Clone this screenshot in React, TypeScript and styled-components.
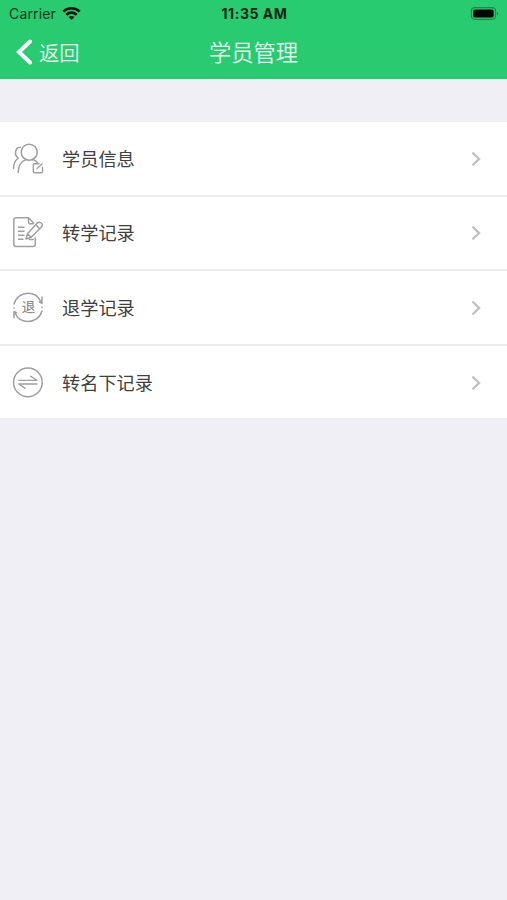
import React from "react";
import styled, { createGlobalStyle } from "styled-components";

const GlobalStyle = createGlobalStyle`
  * { box-sizing: border-box; }
  body {
    margin: 0;
    background: #f0eff5;
    font-family: "Inter", "Noto Sans CJK SC", sans-serif;
  }
`;

const Page = styled.div`
  min-height: 900px;
  background: #f0eff5;
`;

const Header = styled.header`
  height: 79px;
  background: #28cb70;
`;

const StatusBar = styled.div`
  display: grid;
  grid-template-columns: 1fr auto 1fr;
  align-items: center;
  height: 27px;
  padding: 0 7px 0 9px;
  color: #06351b;
`;

const Carrier = styled.div`
  display: flex;
  align-items: center;
  gap: 6px;
  font-size: 14px;
  line-height: 27px;
  letter-spacing: 0.15px;
`;

const Clock = styled.div`
  font-size: 14px;
  line-height: 27px;
  font-weight: 700;
  letter-spacing: 0.55px;
  color: #042512;
`;

const Battery = styled.div`
  display: flex;
  justify-content: flex-end;
`;

const NavBar = styled.nav`
  display: grid;
  grid-template-columns: 1fr auto 1fr;
  align-items: center;
  height: 50px;
  padding: 0 16px;
  color: #e6fbee;
`;

const BackButton = styled.button`
  display: flex;
  align-items: center;
  gap: 6px;
  padding: 0;
  border: 0;
  background: none;
  color: inherit;
  font: 350 20.3px/30px "Noto Sans CJK SC", sans-serif;
`;

const Title = styled.h1`
  margin: 0;
  padding-bottom: 2px;
  font: 350 22.3px/32px "Noto Sans CJK SC", sans-serif;
`;

const List = styled.ul`
  margin: 0;
  padding: 43px 0 0;
  list-style: none;
`;

const Row = styled.li`
  display: flex;
  align-items: center;
  height: 74.6px;
  padding: 1px 26px 0 12px;
  border-bottom: 2px solid #ebebed;
  background: #fff;
`;

const Label = styled.span`
  flex: 1;
  margin-left: 18px;
  padding-bottom: 2px;
  color: #404040;
  font: 400 18.2px/28px "Noto Sans CJK SC", sans-serif;
`;

const IconBox = styled.svg`
  width: 32px;
  height: 32px;
  fill: none;
  stroke: #a0a0a0;
  stroke-width: 1.5;
  stroke-linecap: round;
  stroke-linejoin: round;
`;

const IconText = styled.text`
  fill: #909090;
  stroke: none;
  font: 500 13.5px "Noto Sans CJK SC", sans-serif;
`;

const MembersIcon = () => (
  <IconBox viewBox="0 0 32 32">
    <circle cx="17.2" cy="9.2" r="8" />
    <path d="M6.2 29.500c.1-5.900 2.800-11 7.600-12.900M20.800 16.500c2.500.8 3.700 1.800 4.700 3.200M8.300 4.200C3 4.400 1.800 12 6.300 15 3.200 17.400 1.500 21.200 1.500 25.300" />
    <path strokeWidth="1.400" d="M27 20.700h-4.500a1.200 1.200 0 0 0-1.200 1.200v6.600a1.200 1.200 0 0 0 1.200 1.200h6.800a1.200 1.200 0 0 0 1.200-1.200v-4M25 25.500l5.200-4.700" />
  </IconBox>
);

const TransferIcon = () => (
  <IconBox viewBox="0 0 32 32">
    <path d="M23.300 21v6.300a2.200 2.200 0 0 1-2.200 2.200H4a2.200 2.200 0 0 1-2.200-2.200V3A2.200 2.200 0 0 1 4 .800h12.500l5 5.200M16.500 1v4.300a1.500 1.500 0 0 0 1.500 1.500h3.200" />
    <path d="M6.500 10.300h5.500M6.500 14.300h5.500M6.500 18.300h5.500M6.500 22.300h4.500M17.300 22.400h4" />
    <path d="m14 22 1.500-5.200 9.800-10.700c2.300-2.300 6.500.9 4.400 3.600L19.200 20.300 14 22ZM23.700 7.800l4.100 3.900M15.700 17l3.400 3.100" />
  </IconBox>
);

const WithdrawalIcon = () => (
  <IconBox viewBox="0 0 32 32">
    <path d="M2 12C4 5 10 1.200 16 1.200c5.300 0 10.300 3 12.600 8M30 5v6.200l-2.600-1.200M30 19c-2 7-8 10.500-14 10.500-5.300 0-10.300-2.700-12.600-7.700M2 25.700v-6.200l2.600 1.200M2 15.700v.2M30 15.200v.2" />
    <IconText x="9.700" y="20.300">退</IconText>
  </IconBox>
);

const SwapIcon = () => (
  <IconBox viewBox="0 0 32 32">
    <circle cx="15.900" cy="15.400" r="14.300" />
    <path strokeWidth="1.300" d="M6.700 13.300h18.200l-6.500-4.200M25 17H6.700l6.500 4.400" />
  </IconBox>
);

const BackIcon = styled.svg`
  width: 17px;
  height: 28px;
  fill: none;
  stroke: #fff;
  stroke-width: 4;
  stroke-linecap: round;
`;

const Chevron = styled.svg`
  width: 10px;
  height: 16px;
  fill: none;
  stroke: #c1c1c3;
  stroke-width: 2.4;
`;

const rows = [
  { label: "学员信息", Icon: MembersIcon },
  { label: "转学记录", Icon: TransferIcon },
  { label: "退学记录", Icon: WithdrawalIcon },
  { label: "转名下记录", Icon: SwapIcon },
];

export default function App() {
  return (
    <Page>
      <GlobalStyle />
      <Header>
        <StatusBar>
          <Carrier>
            Carrier
            <svg width="19" height="14" viewBox="0 0 19 14" fill="none" stroke="#03150a" strokeWidth="2.600">
              <path d="M1.300 4.600C6 .2 13 .2 17.700 4.600M4.300 7.700c3-2.800 7.400-2.800 10.400 0" />
              <path d="M6.600 10.100c1.700-1.500 4.100-1.500 5.800 0l-2.900 3Z" fill="#03150a" stroke="none" />
            </svg>
          </Carrier>
          <Clock>11:35 AM</Clock>
          <Battery>
            <svg width="30" height="13" viewBox="0 0 31 14">
              <rect x="0.800" y="0.700" width="26" height="12.600" rx="3.800" fill="none" stroke="#168c48" strokeWidth="1.200" />
              <rect x="2.800" y="2.600" width="22" height="8.800" rx="2" fill="#000" />
              <path d="M28.300 4.800c2 .8 2 3.600 0 4.400Z" fill="#168c48" />
            </svg>
          </Battery>
        </StatusBar>
        <NavBar>
          <BackButton>
            <BackIcon viewBox="0 0 17 28">
              <path d="M14 3.500 3 14l11 10.500" />
            </BackIcon>
            返回
          </BackButton>
          <Title>学员管理</Title>
        </NavBar>
      </Header>
      <List>
        {rows.map(({ label, Icon }) => (
          <Row key={label}>
            <Icon />
            <Label>{label}</Label>
            <Chevron viewBox="0 0 10 16">
              <path d="m1.500 1.500 6.500 6.500-6.500 6.500" />
            </Chevron>
          </Row>
        ))}
      </List>
    </Page>
  );
}
